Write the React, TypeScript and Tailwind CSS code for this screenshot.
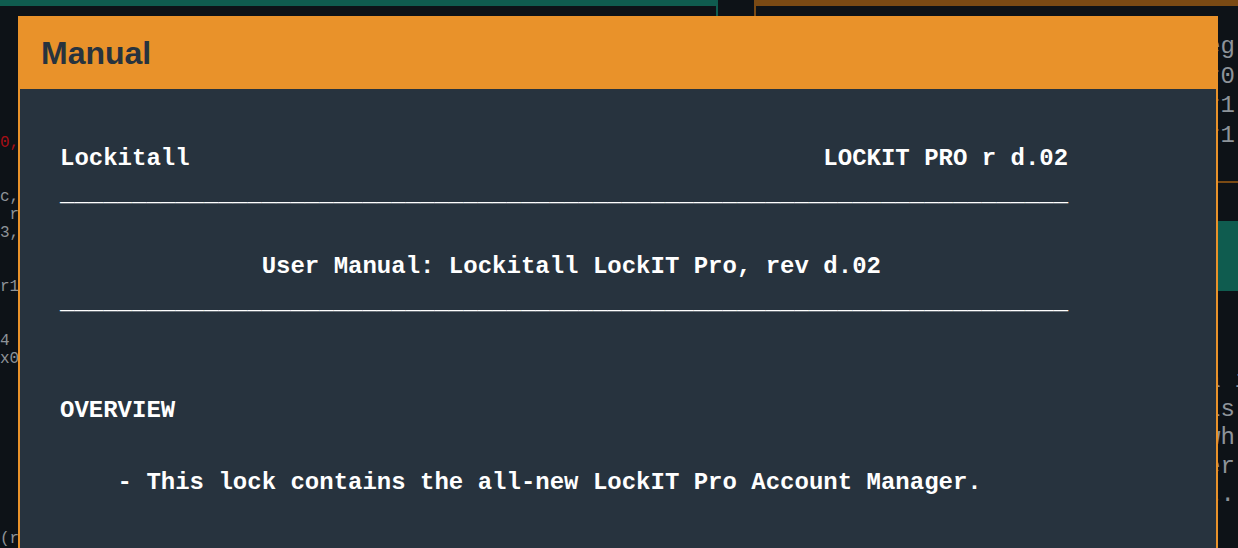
const leftLines: { text: string; red?: boolean }[] = [
  { text: '0,', red: true },
  { text: '' },
  { text: '' },
  { text: 'c,' },
  { text: ' r' },
  { text: '3,' },
  { text: '' },
  { text: '' },
  { text: 'r1' },
  { text: '' },
  { text: '' },
  { text: '4' },
  { text: 'x0' },
  { text: '' },
  { text: '' },
  { text: '' },
  { text: '' },
  { text: '' },
  { text: '' },
  { text: '' },
  { text: '' },
  { text: '' },
  { text: '(r' },
]

const registers = ['eg', 'r0', 'r1', 'r1']
const notes = ['a i', 'is', 'wh', 'er', 't.']

const manual = [
  'Lockitall                                            LOCKIT PRO r d.02',
  '______________________________________________________________________',
  '',
  '              User Manual: Lockitall LockIT Pro, rev d.02',
  '______________________________________________________________________',
  '',
  '',
  'OVERVIEW',
  '',
  '    - This lock contains the all-new LockIT Pro Account Manager.',
]

export default function App() {
  return (
    <div className="relative w-[1238px] h-[548px] overflow-hidden bg-[#0d1217] flex">
      {/* Disassembly panel */}
      <div className="w-[718px] shrink-0 border-t-[6px] border-r-2 border-[#0f5c4f]">
        <pre className="pt-[128px] font-['Liberation_Mono',monospace] text-[16px] leading-[18px] text-[#8e9398]">
          {leftLines.map((l, i) => (
            <div key={i} className={`h-[18px] ${l.red ? 'text-[#a60f16]' : ''}`}>
              {l.text}
            </div>
          ))}
        </pre>
      </div>

      {/* Registers / description panel */}
      <div className="ml-[36px] flex-1 flex flex-col border-t-[6px] border-l-2 border-[#7a4a14]">
        <div className="h-[177px] shrink-0 border-b-2 border-[#7a4a14] pt-[26px]">
          <pre className="pl-[450px] font-['Liberation_Mono',monospace] text-[24px] leading-[29.5px] text-[#8e949a]">
            {registers.map((r, i) => (
              <div key={i} className="whitespace-pre">{r}</div>
            ))}
          </pre>
        </div>
        <div className="mt-[38px] h-[70px] bg-[#0f5c4f]" />
        <pre className="mt-[76px] pl-[450px] font-['Liberation_Mono',monospace] text-[24px] leading-[28.5px] text-[#8e949a]">
          {notes.map((n, i) => (
            <div key={i} className="whitespace-pre">{n}</div>
          ))}
        </pre>
      </div>

      {/* Manual dialog */}
      <div className="absolute left-[18px] top-[16px] w-[1200px] h-[560px] flex flex-col">
        <div className="h-[73px] shrink-0 bg-[#e9922a] pl-[23px] pt-[21px]">
          <h2 className="font-['Liberation_Sans',Arial,sans-serif] font-bold text-[32px] leading-[32px] text-[#27333e]">
            Manual
          </h2>
        </div>
        <div className="flex-1 bg-[#27333e] border-x-2 border-[#e9922a] pl-[40px] pt-[52px]">
          <pre className="font-['Liberation_Mono','Courier_New',monospace] font-bold text-[24px] leading-[36px] text-white">
            {manual.map((line, i) => (
              <div key={i} className="h-[36px] whitespace-pre">{line}</div>
            ))}
          </pre>
        </div>
      </div>
    </div>
  )
}
